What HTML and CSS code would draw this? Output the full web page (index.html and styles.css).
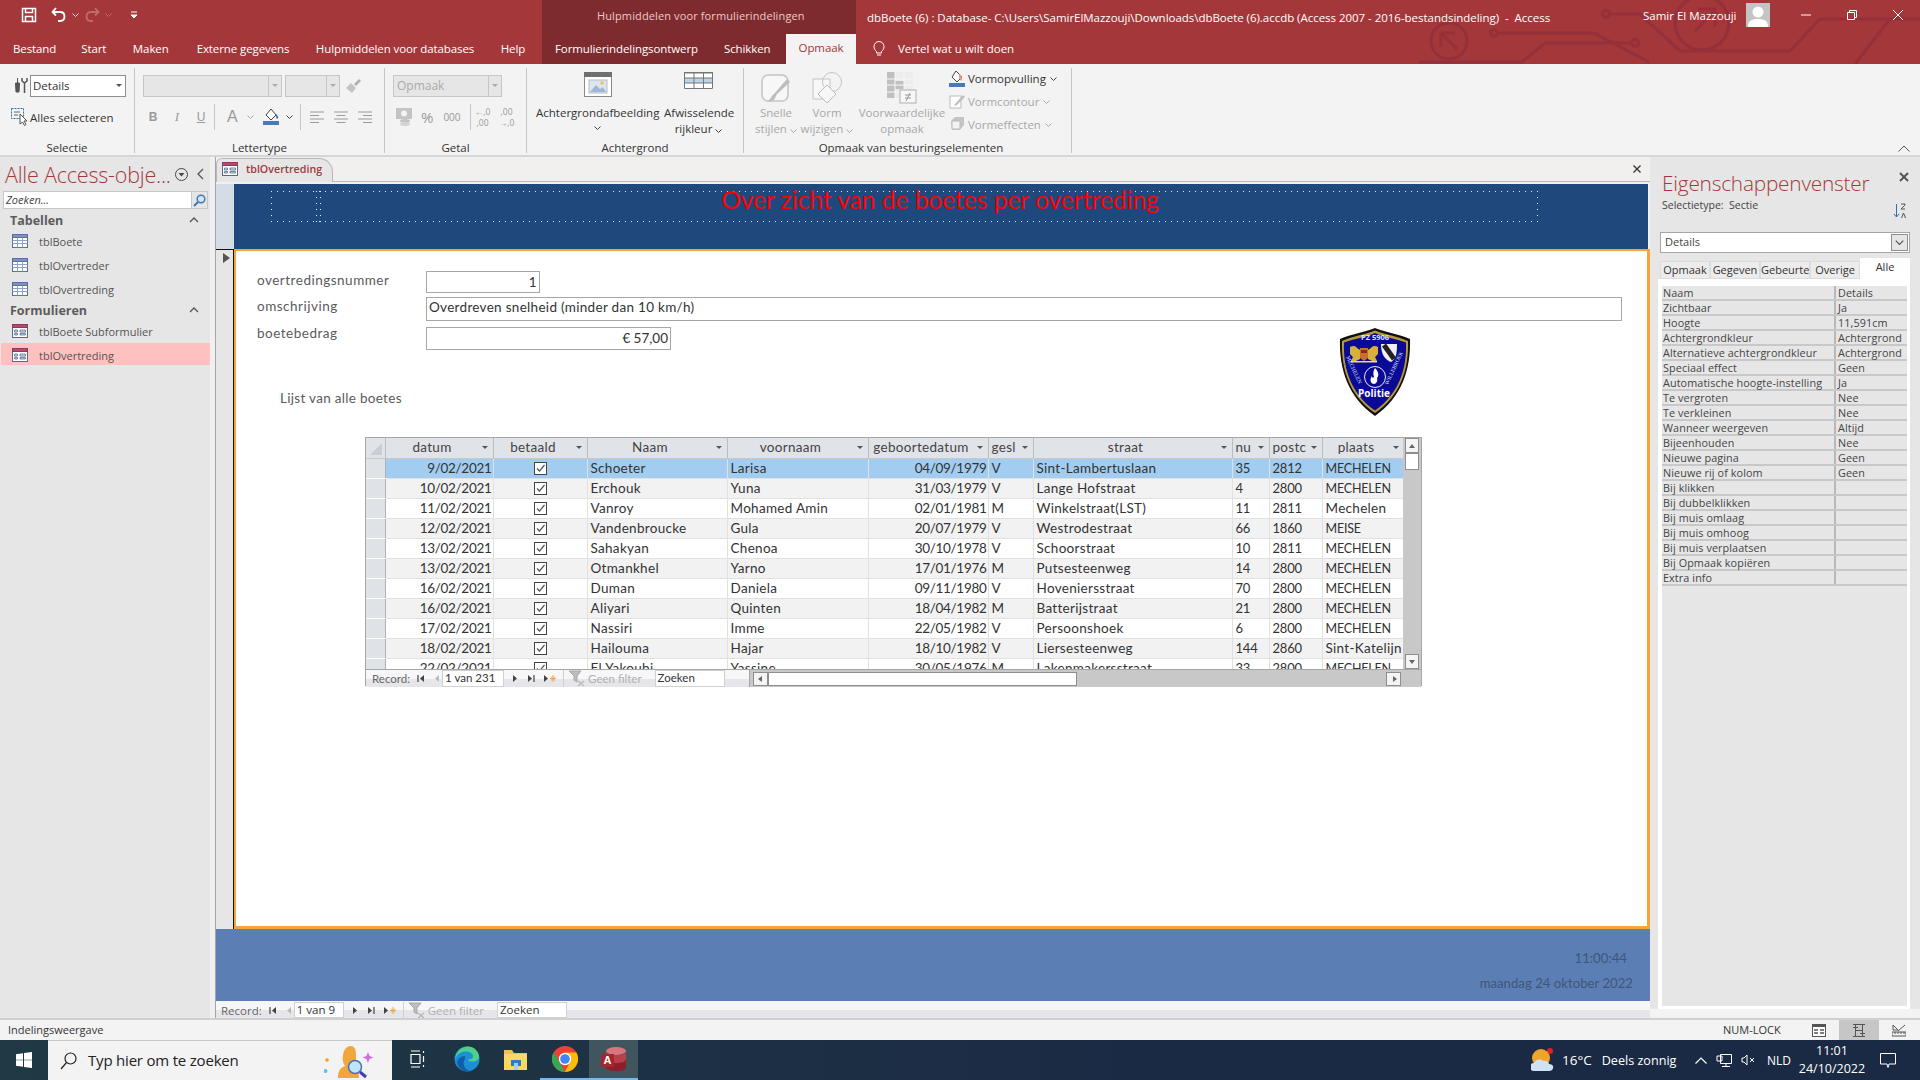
FILE: index.html
```html
<!DOCTYPE html>
<html lang="nl">
<head>
    <meta charset="UTF-8">
    <title>dbBoete - Access</title>
    <link rel="stylesheet" href="styles.css">
</head>
<body>

<!-- shared icons -->
<svg class="defs" width="0" height="0">
    <symbol id="i-table" viewBox="0 0 16 14">
        <rect x="0.5" y="0.5" width="15" height="13" fill="#fff" stroke="#5a6f9e"/>
        <rect x="0.5" y="0.5" width="15" height="3" fill="#7d92bd" stroke="#5a6f9e"/>
        <path d="M5.5 3.5v10M10.5 3.5v10M0.5 6.5h15M0.5 9.5h15" stroke="#8ea2c8" fill="none"/>
    </symbol>
    <symbol id="i-form" viewBox="0 0 16 14">
        <rect x="0.5" y="0.5" width="15" height="13" fill="#fff" stroke="#56688e"/>
        <rect x="0.5" y="0.5" width="15" height="3" fill="#b9476f" stroke="#8f3a5b"/>
        <path d="M2.5 6h3v2h-3zM2.5 9.5h3v1.5h-3zM8 6h5.5v2H8zM8 9.5h5.5v1.5H8z" fill="#dbe3f2" stroke="#56688e" stroke-width="0.8"/>
    </symbol>
    <symbol id="i-chev" viewBox="0 0 7 4">
        <path d="M0.5 0.5l3 3 3-3" fill="none" stroke="currentColor"/>
    </symbol>
    <symbol id="i-check" viewBox="0 0 14 14">
        <rect x="0.5" y="0.5" width="12" height="12" fill="#fff" stroke="#444"/>
        <path d="M3 6.5l2.5 2.5 5-6" fill="none" stroke="#555" stroke-width="1.2"/>
    </symbol>
    <symbol id="i-first" viewBox="0 0 8 9">
        <path d="M1 1v7" stroke="#444" stroke-width="1.2"/><path d="M7 1v7L3 4.500z" fill="#444"/>
    </symbol>
    <symbol id="i-prev" viewBox="0 0 8 9">
        <path d="M6 1v7L2 4.500z" fill="#bbb"/>
    </symbol>
    <symbol id="i-next" viewBox="0 0 8 9">
        <path d="M2 1v7l4-3.500z" fill="#444"/>
    </symbol>
    <symbol id="i-last" viewBox="0 0 8 9">
        <path d="M1 1v7l4-3.500z" fill="#444"/><path d="M7 1v7" stroke="#444" stroke-width="1.2"/>
    </symbol>
    <symbol id="i-new" viewBox="0 0 14 9">
        <path d="M1 1v7l4-3.500z" fill="#444"/>
        <path d="M10 1v7M7 4.500h6M8 2.500l4 4M12 2.500l-4 4" stroke="#e9a94b" stroke-width="1"/>
    </symbol>
    <symbol id="i-funnel" viewBox="0 0 18 17">
        <path d="M1 1h12L9 6v6L6 10V6z" fill="#bdbdbd" stroke="#a8a8a8"/>
        <path d="M10 11l6 5M16 11l-6 5" stroke="#b8b8b8" stroke-width="1.5"/>
    </symbol>
</svg>

<div class="topbar">
    <svg class="circuit" width="505" height="64" viewBox="0 0 505 64">
        <g fill="none" stroke="#93303a" stroke-width="3">
            <circle cx="34" cy="41" r="18"/>
            <path d="M26 33h14M26 33v14M26 33l16 16"/>
            <path d="M4 62h103l23-19h88"/><circle cx="220" cy="43" r="3.500"/>
            <circle cx="79" cy="33" r="3.500"/>
            <path d="M83 33h96l55 29"/>
            <circle cx="191" cy="14" r="3.500"/>
            <path d="M195 14h30l40 37h110l30-32h100"/>
            <circle cx="287" cy="23" r="27"/>
            <path d="M280 31l18-19M283 9h17v17"/>
            <path d="M440 64l35-45"/>
        </g>
    </svg>
    <div class="titlebar">
        <div class="qat">
            <svg class="qat-save" width="16" height="16" viewBox="0 0 16 16"><path d="M1.500 1.500h13v13h-13z M4.500 1.500v4h7v-4 M4.500 14.500v-5h7v5" fill="none" stroke="#fff" stroke-width="1.500"/></svg>
            <svg width="16" height="16" viewBox="0 0 16 16"><path d="M5 1L1.500 5 5 8.500M2 5h7c3 0 4.500 2 4.500 4.500S12 14 9 14H7" fill="none" stroke="#fff" stroke-width="1.800"/></svg>
            <svg class="chev-sm" width="7" height="4"><use href="#i-chev"/></svg>
            <svg class="qat-off" width="16" height="16" viewBox="0 0 16 16"><path d="M11 1l3.500 4L11 8.500M14 5H7C4 5 2.500 7 2.500 9.500S4 14 7 14h2" fill="none" stroke="#c46a6c" stroke-width="1.800"/></svg>
            <svg class="chev-sm qat-off" width="7" height="4"><use href="#i-chev"/></svg>
            <svg class="qat-more" width="8" height="8" viewBox="0 0 8 8"><path d="M1 1h6M1 4h6l-3 3z" fill="#fff" stroke="#fff"/></svg>
        </div>
        <div class="context-title">Hulpmiddelen voor formulierindelingen</div>
        <div class="doc-title">dbBoete (6) : Database- C:\Users\SamirElMazzouji\Downloads\dbBoete (6).accdb (Access 2007 - 2016-bestandsindeling)&nbsp; -&nbsp; Access</div>
        <div class="user">Samir El Mazzouji</div>
        <svg class="avatar" width="24" height="24" viewBox="0 0 24 24">
            <rect width="24" height="24" fill="#c4c4c4"/>
            <circle cx="12" cy="9" r="5.500" fill="#fff"/>
            <path d="M2 24c0-6 3-8 10-8s10 2 10 8z" fill="#fff"/>
        </svg>
        <div class="winbtns">
            <svg width="10" height="10" viewBox="0 0 10 10"><path d="M0 5h10" stroke="#fff"/></svg>
            <svg width="10" height="10" viewBox="0 0 10 10"><path d="M0.500 2.500h7v7h-7zM2.500 2.500v-2h7v7h-2" fill="none" stroke="#fff"/></svg>
            <svg width="10" height="10" viewBox="0 0 10 10"><path d="M0 0l10 10M10 0L0 10" stroke="#fff"/></svg>
        </div>
    </div>
    <div class="tabs">
        <div class="tabs-main">
            <span class="tab t-bestand">Bestand</span>
            <span class="tab t-start">Start</span>
            <span class="tab t-maken">Maken</span>
            <span class="tab t-extern">Externe gegevens</span>
            <span class="tab t-hulp">Hulpmiddelen voor databases</span>
            <span class="tab">Help</span>
        </div>
        <div class="tabs-context">
            <span class="tab t-ontwerp">Formulierindelingsontwerp</span>
            <span class="tab t-schikken">Schikken</span>
            <span class="tab tab-active">Opmaak</span>
        </div>
        <div class="tellme">
            <svg width="12" height="16" viewBox="0 0 12 16"><path d="M3.500 11.500C2 10 1 9 1 6.500a5 5 0 0 1 10 0C11 9 10 10 8.500 11.500v1.500h-5zM4 15h4" fill="none" stroke="#fff"/></svg>
            <span>Vertel wat u wilt doen</span>
        </div>
    </div>
</div>

<div class="ribbon">
    <div class="rgroup g-selectie">
        <div class="rbody">
            <div class="rrow">
                <svg class="sel-tools" width="14" height="16" viewBox="0 0 14 16"><path d="M3.500 0v5M1.500 5h4l-.500 9h-3z" fill="#555" stroke="#555"/><path d="M10.500 5v10M8 0v3l2.500 2L13 3V0" fill="none" stroke="#555" stroke-width="1.500"/></svg>
                <div class="select sel-details">Details<i class="caret"></i></div>
            </div>
            <div class="rrow sel-all">
                <svg width="17" height="18" viewBox="0 0 17 18"><rect x="0.500" y="0.500" width="12" height="10" fill="none" stroke="#2f6fb5" stroke-dasharray="2 1"/><path d="M3 4h6M3 7h4" stroke="#666"/><path d="M9 6v10l2.500-2 2 3.500 1.500-1-2-3.500h3z" fill="#fff" stroke="#555"/></svg>
                <span>Alles selecteren</span>
            </div>
        </div>
        <div class="rlabel">Selectie</div>
    </div>

    <div class="rgroup g-letter">
        <div class="rbody">
            <div class="rrow">
                <div class="select off w-font"><i class="dropbox"></i></div>
                <div class="select off w-size"><i class="dropbox"></i></div>
                <svg class="brush" width="16" height="16" viewBox="0 0 16 16"><path d="M1 10l5-5 5 5-4 5z" fill="#c4c4c4"/><path d="M9 6l5-5 2 2-5 5z" fill="#b0b0b0"/></svg>
            </div>
            <div class="rrow fmt-row">
                <b class="fbtn">B</b>
                <i class="fbtn fbtn-i">I</i>
                <u class="fbtn">U</u>
                <span class="rsep s1"></span>
                <span class="big-a">A</span>
                <svg class="chev-g" width="7" height="4"><use href="#i-chev"/></svg>
                <svg class="fill-ic" width="17" height="17" viewBox="0 0 17 17"><path d="M8 1l-5 6 5 5 5-5z" fill="#fff" stroke="#444"/><path d="M13 6c2 2 3 4 1 5-1-1-1-3-1-5z" fill="#2f6fb5"/><rect y="13" width="16" height="4" fill="#4a7ab5"/></svg>
                <svg class="chev-d" width="7" height="4"><use href="#i-chev"/></svg>
                <span class="rsep s2"></span>
                <svg class="align" width="14" height="12" viewBox="0 0 14 12"><path d="M0 1h14M0 4.500h9M0 8h14M0 11.500h9" stroke="#9a9a9a"/></svg>
                <svg class="align" width="14" height="12" viewBox="0 0 14 12"><path d="M0 1h14M2.500 4.500h9M0 8h14M2.500 11.500h9" stroke="#9a9a9a"/></svg>
                <svg class="align" width="14" height="12" viewBox="0 0 14 12"><path d="M0 1h14M5 4.500h9M0 8h14M5 11.500h9" stroke="#9a9a9a"/></svg>
            </div>
        </div>
        <div class="rlabel">Lettertype</div>
    </div>

    <div class="rgroup g-getal">
        <div class="rbody">
            <div class="rrow">
                <div class="select off w-num"><span>Opmaak</span><i class="dropbox"></i></div>
            </div>
            <div class="rrow fmt-row num-row">
                <svg width="16" height="18" viewBox="0 0 16 18"><rect width="16" height="11" fill="#c4c4c4"/><circle cx="8" cy="5.500" r="3" fill="#f3f3f3"/><ellipse cx="9" cy="13" rx="5" ry="2" fill="#c4c4c4"/><ellipse cx="9" cy="16" rx="5" ry="2" fill="#d4d4d4"/></svg>
                <span class="pct">%</span>
                <span class="thou">000</span>
                <span class="rsep s3"></span>
                <span class="dec">←,0<br>,00</span>
                <span class="dec">,00<br>→,0</span>
            </div>
        </div>
        <div class="rlabel">Getal</div>
    </div>

    <div class="rgroup g-achter">
        <div class="rbody rbody-big">
            <div class="lbtn w-afb">
                <div class="lic">
                    <svg width="28" height="25" viewBox="0 0 28 25"><rect x="0.500" y="0.500" width="27" height="24" fill="#fff" stroke="#8a8a8a"/><rect width="28" height="5" fill="#6f6f6f"/><rect x="5" y="8" width="18" height="13" fill="#dbe6f2" stroke="#bbb"/><path d="M6 20l6-7 4 4 3-2 3 5z" fill="#9db8d6"/><circle cx="18" cy="11" r="1.800" fill="#f0c050"/></svg>
                </div>
                <div>Achtergrondafbeelding</div>
                <svg class="chev-d lchev" width="7" height="4"><use href="#i-chev"/></svg>
            </div>
            <div class="lbtn w-afw">
                <div class="lic">
                    <svg width="29" height="17" viewBox="0 0 29 17"><rect width="29" height="17" fill="#fff"/><rect y="6" width="29" height="5" fill="#bcd3ea"/><path d="M0.500 0.500h28v16h-28zM0.500 6h28M0.500 11h28M10 0v17M19.500 0v17" fill="none" stroke="#777"/><rect x="0" y="0" width="29" height="1.500" fill="#777"/></svg>
                </div>
                <div>Afwisselende</div>
                <div>rijkleur <svg class="chev-d" width="7" height="4"><use href="#i-chev"/></svg></div>
            </div>
        </div>
        <div class="rlabel">Achtergrond</div>
    </div>

    <div class="rgroup g-opmaak">
        <div class="rbody rbody-big">
            <div class="lbtn off-txt w-snel">
                <div class="lic">
                    <svg width="30" height="32" viewBox="0 0 30 32"><rect x="1" y="3" width="26" height="26" rx="6" fill="#f7f7f7" stroke="#c4c4c4" stroke-width="1.500"/><path d="M29 10L16 22l-3 6c-3 1-5 2-7 1 4-1 4-5 7-7l13-15z" fill="#bdbdbd"/></svg>
                </div>
                <div>Snelle</div>
                <div>stijlen <svg class="chev-g" width="7" height="4"><use href="#i-chev"/></svg></div>
            </div>
            <div class="lbtn off-txt w-vorm">
                <div class="lic">
                    <svg width="30" height="33" viewBox="0 0 30 33"><path d="M1 7h17v20H1z" fill="#f7f7f7" stroke="#c4c4c4"/><circle cx="20" cy="10" r="9.500" fill="none" stroke="#c4c4c4"/><path d="M15 13l9 9-9 9-9-9z" fill="#f7f7f7" stroke="#bbb"/></svg>
                </div>
                <div>Vorm</div>
                <div>wijzigen <svg class="chev-g" width="7" height="4"><use href="#i-chev"/></svg></div>
            </div>
            <div class="lbtn off-txt w-voor">
                <div class="lic">
                    <svg width="30" height="32" viewBox="0 0 30 32"><path d="M0 0h26v26H0z" fill="#ececec"/><path d="M0 0h8v26H0zM8 9h9v8H8z" fill="#c0c0c0"/><path d="M0 7h26M0 13h26M0 20h26M8 0v26M17 0v26" stroke="#f7f7f7"/><rect x="13" y="18" width="16" height="13" fill="#f7f7f7" stroke="#b0b0b0"/><path d="M18 23h6M18 26h6M23 21l-4 8" stroke="#999"/></svg>
                </div>
                <div>Voorwaardelijke</div>
                <div>opmaak</div>
            </div>
            <div class="shape-col">
                <div class="shape-row on">
                    <svg width="17" height="17" viewBox="0 0 17 17"><path d="M7 1l-4 6 5 5 5-5z" fill="#fff" stroke="#444"/><path d="M10 4c3 1 4 5 2 7l-2-3z" fill="#e89a7a"/><rect y="13" width="16" height="4" fill="#4a7ab5"/></svg>
                    <span>Vormopvulling</span>
                    <svg class="chev-d" width="7" height="4"><use href="#i-chev"/></svg>
                </div>
                <div class="shape-row">
                    <svg width="17" height="17" viewBox="0 0 17 17"><rect x="1" y="3" width="11" height="12" fill="#fff" stroke="#bbb"/><path d="M6 11l8-9 2 2-8 8-3 1z" fill="#c0c0c0"/></svg>
                    <span>Vormcontour</span>
                    <svg class="chev-g" width="7" height="4"><use href="#i-chev"/></svg>
                </div>
                <div class="shape-row">
                    <svg width="17" height="17" viewBox="0 0 17 17"><path d="M2 5l4-4h9v8l-4 5H3z" fill="#c4c4c4"/><path d="M3 5h8v8H3z" fill="#f3f3f3" stroke="#bbb"/></svg>
                    <span>Vormeffecten</span>
                    <svg class="chev-g" width="7" height="4"><use href="#i-chev"/></svg>
                </div>
            </div>
        </div>
        <div class="rlabel rlabel-opmaak">Opmaak van besturingselementen</div>
    </div>

    <svg class="collapse" width="12" height="7" viewBox="0 0 12 7"><path d="M0.500 6.500L6 1l5.500 5.500" fill="none" stroke="#555"/></svg>
</div>

<div class="main">
    <nav class="nav">
        <div class="nav-head">
            <span class="nav-title">Alle Access-obje...</span>
            <svg width="13" height="13" viewBox="0 0 13 13"><circle cx="6.500" cy="6.500" r="6" fill="none" stroke="#444"/><path d="M3.500 5h6l-3 3.500z" fill="#444"/></svg>
            <svg class="nav-back" width="7" height="12" viewBox="0 0 7 12"><path d="M6 1L1 6l5 5" fill="none" stroke="#555" stroke-width="1.300"/></svg>
        </div>
        <div class="nav-search">
            <span class="nav-input">Zoeken...</span>
            <span class="nav-mag"><svg width="13" height="13" viewBox="0 0 13 13"><circle cx="8" cy="5" r="3.800" fill="#d6e6f5" stroke="#3c78b5" stroke-width="1.500"/><path d="M5 8l-4 4" stroke="#3c78b5" stroke-width="2"/></svg></span>
        </div>
        <div class="nav-cat"><span>Tabellen</span><svg width="10" height="6" viewBox="0 0 10 6"><path d="M1 5l4-4 4 4" fill="none" stroke="#555" stroke-width="1.300"/></svg></div>
        <div class="nav-item"><svg width="16" height="14"><use href="#i-table"/></svg>tblBoete</div>
        <div class="nav-item"><svg width="16" height="14"><use href="#i-table"/></svg>tblOvertreder</div>
        <div class="nav-item"><svg width="16" height="14"><use href="#i-table"/></svg>tblOvertreding</div>
        <div class="nav-cat nav-cat-2"><span>Formulieren</span><svg width="10" height="6" viewBox="0 0 10 6"><path d="M1 5l4-4 4 4" fill="none" stroke="#555" stroke-width="1.300"/></svg></div>
        <div class="nav-item"><svg width="16" height="14"><use href="#i-form"/></svg>tblBoete Subformulier</div>
        <div class="nav-item nav-sel"><svg width="16" height="14"><use href="#i-form"/></svg>tblOvertreding</div>
    </nav>

    <section class="doc">
        <div class="doc-tabs">
            <div class="doc-tab">
                <svg width="16" height="14"><use href="#i-form"/></svg>
                <span>tblOvertreding</span>
            </div>
            <svg class="doc-close" width="8" height="8" viewBox="0 0 8 8"><path d="M0.500 0.500l7 7M7.500 0.500l-7 7" stroke="#333" stroke-width="1.300"/></svg>
        </div>

        <div class="form-header">
            <div class="sel-head"></div>
            <div class="head-blue">
                <div class="head-box">
                    <span class="head-title">Over zicht van de boetes per overtreding</span>
                </div>
            </div>
        </div>

        <div class="form-detail">
            <div class="sel-detail"><i class="sel-arrow"></i></div>
            <div class="detail">
                <svg class="logo" width="72" height="90" viewBox="0 0 72 90">
                    <path d="M36 1C26 5 12 7 1 12c-1 30 8 58 35 77C63 70 72 42 71 12 60 7 46 5 36 1z" fill="#111"/>
                    <path d="M36 3.500C26 7.500 13 9.500 3 14c-1 29 8 55 33 72C61 69 70 43 69 14 59 9.500 46 7.500 36 3.500z" fill="#b79a3a"/>
                    <path d="M36 6C27 10 15 12 5 15.500c-1 28 8 52 31 68 23-16 32-40 31-68C57 12 45 10 36 6z" fill="#0a0a96"/>
                    <text x="36" y="13" class="logo-pz">PZ 5906</text>
                    <path d="M11 20c3-2 6-1 7 1l3 2v9l-4 2h-5l2-4-3-3z" fill="#d6b23c"/>
                    <path d="M39 20c-3-2-6-1-7 1l-3 2v9l4 2h5l-2-4 3-3z" fill="#d6b23c"/>
                    <path d="M21 21h8v10l-4 3-4-3z" fill="#c9702a"/>
                    <path d="M22 23h6v3h-6z" fill="#8a2a1c"/>
                    <rect x="12" y="34" width="26" height="1.500" fill="#e3d9a0"/>
                    <path d="M42 17h16c0 10-1 15-6 18-5-2-10-6-10-18z" fill="#f0f0f0"/>
                    <path d="M45 18l10 14" stroke="#222" stroke-width="5"/>
                    <text x="7" y="30" class="logo-side" transform="rotate(65 7 30)">MECHELEN</text>
                    <text x="49" y="58" class="logo-side" transform="rotate(-65 49 58)">WILLEBROEK</text>
                    <circle cx="36" cy="50" r="10.500" fill="none" stroke="#e8e8f6"/>
                    <path d="M36 41c4 4 4 8 2 10 1 3-1 6-3 6-3 0-5-4-2-8 0 2 1 2 2 1-1-3-1-6 1-9z" fill="#fff"/>
                    <text x="35" y="70" class="logo-pol">Politie</text>
                </svg>
                <div class="field f-nr">
                    <label>overtredingsnummer</label>
                    <div class="inp inp-r w-nr">1</div>
                </div>
                <div class="field f-om">
                    <label>omschrijving</label>
                    <div class="inp w-om">Overdreven snelheid (minder dan 10 km/h)</div>
                </div>
                <div class="field f-bo">
                    <label>boetebedrag</label>
                    <div class="inp inp-r w-bo">€&#8239;57,00</div>
                </div>
                <div class="sub-label">Lijst van alle boetes</div>

                <div class="ds">
                    <div class="ds-body">
                        <div class="ds-clip">
                            <table class="ds-table">
                                <colgroup>
                                    <col class="c-sel"><col class="c-dat"><col class="c-bet"><col class="c-naam"><col class="c-voor"><col class="c-geb"><col class="c-ges"><col class="c-str"><col class="c-nu"><col class="c-pc"><col class="c-pl">
                                </colgroup>
                                <thead>
                                    <tr><th class="corner"><i class="corner-mark"></i></th><th>datum</th><th>betaald</th><th>Naam</th><th>voornaam</th><th>geboortedatum</th><th class="tl">gesl</th><th>straat</th><th class="tl">nu</th><th class="tl">postc</th><th>plaats</th></tr>
                                </thead>
                                <tbody>
                                    <tr class="cur"><td class="rs"></td><td class="r">9/02/2021</td><td class="c"><svg width="14" height="14"><use href="#i-check"/></svg></td><td>Schoeter</td><td>Larisa</td><td class="r">04/09/1979</td><td>V</td><td>Sint-Lambertuslaan</td><td class="n">35</td><td class="n">2812</td><td class="up">MECHELEN</td></tr>
                                    <tr><td class="rs"></td><td class="r">10/02/2021</td><td class="c"><svg width="14" height="14"><use href="#i-check"/></svg></td><td>Erchouk</td><td>Yuna</td><td class="r">31/03/1979</td><td>V</td><td>Lange Hofstraat</td><td class="n">4</td><td class="n">2800</td><td class="up">MECHELEN</td></tr>
                                    <tr><td class="rs"></td><td class="r">11/02/2021</td><td class="c"><svg width="14" height="14"><use href="#i-check"/></svg></td><td>Vanroy</td><td>Mohamed Amin</td><td class="r">02/01/1981</td><td>M</td><td>Winkelstraat(LST)</td><td class="n">11</td><td class="n">2811</td><td>Mechelen</td></tr>
                                    <tr><td class="rs"></td><td class="r">12/02/2021</td><td class="c"><svg width="14" height="14"><use href="#i-check"/></svg></td><td>Vandenbroucke</td><td>Gula</td><td class="r">20/07/1979</td><td>V</td><td>Westrodestraat</td><td class="n">66</td><td class="n">1860</td><td class="up">MEISE</td></tr>
                                    <tr><td class="rs"></td><td class="r">13/02/2021</td><td class="c"><svg width="14" height="14"><use href="#i-check"/></svg></td><td>Sahakyan</td><td>Chenoa</td><td class="r">30/10/1978</td><td>V</td><td>Schoorstraat</td><td class="n">10</td><td class="n">2811</td><td class="up">MECHELEN</td></tr>
                                    <tr><td class="rs"></td><td class="r">13/02/2021</td><td class="c"><svg width="14" height="14"><use href="#i-check"/></svg></td><td>Otmankhel</td><td>Yarno</td><td class="r">17/01/1976</td><td>M</td><td>Putsesteenweg</td><td class="n">14</td><td class="n">2800</td><td class="up">MECHELEN</td></tr>
                                    <tr><td class="rs"></td><td class="r">16/02/2021</td><td class="c"><svg width="14" height="14"><use href="#i-check"/></svg></td><td>Duman</td><td>Daniela</td><td class="r">09/11/1980</td><td>V</td><td>Hoveniersstraat</td><td class="n">70</td><td class="n">2800</td><td class="up">MECHELEN</td></tr>
                                    <tr><td class="rs"></td><td class="r">16/02/2021</td><td class="c"><svg width="14" height="14"><use href="#i-check"/></svg></td><td>Aliyari</td><td>Quinten</td><td class="r">18/04/1982</td><td>M</td><td>Batterijstraat</td><td class="n">21</td><td class="n">2800</td><td class="up">MECHELEN</td></tr>
                                    <tr><td class="rs"></td><td class="r">17/02/2021</td><td class="c"><svg width="14" height="14"><use href="#i-check"/></svg></td><td>Nassiri</td><td>Imme</td><td class="r">22/05/1982</td><td>V</td><td>Persoonshoek</td><td class="n">6</td><td class="n">2800</td><td class="up">MECHELEN</td></tr>
                                    <tr><td class="rs"></td><td class="r">18/02/2021</td><td class="c"><svg width="14" height="14"><use href="#i-check"/></svg></td><td>Hailouma</td><td>Hajar</td><td class="r">18/10/1982</td><td>V</td><td>Liersesteenweg</td><td class="n">144</td><td class="n">2860</td><td>Sint-Katelijn</td></tr>
                                    <tr><td class="rs"></td><td class="r">22/02/2021</td><td class="c"><svg width="14" height="14"><use href="#i-check"/></svg></td><td>El Yakoubi</td><td>Yassine</td><td class="r">30/05/1976</td><td>M</td><td>Lakenmakersstraat</td><td class="n">33</td><td class="n">2800</td><td class="up">MECHELEN</td></tr>
                                </tbody>
                            </table>
                        </div>
                        <div class="vscroll">
                            <div class="sb-btn"><i class="up"></i></div>
                            <div class="sb-thumb"></div>
                            <div class="sb-track"></div>
                            <div class="sb-btn"><i class="down"></i></div>
                        </div>
                    </div>
                    <div class="ds-nav">
                        <div class="recnav rec-ds">
                            <span class="rec-lbl">Record:</span>
                            <svg class="rn" width="8" height="9"><use href="#i-first"/></svg>
                            <svg class="rn rn-p" width="8" height="9"><use href="#i-prev"/></svg>
                            <span class="rec-box rb-231">1 van 231</span>
                            <svg class="rn rn-n" width="8" height="9"><use href="#i-next"/></svg>
                            <svg class="rn" width="8" height="9"><use href="#i-last"/></svg>
                            <svg class="rn-new" width="14" height="9"><use href="#i-new"/></svg>
                            <span class="rec-filter"><svg width="18" height="17"><use href="#i-funnel"/></svg>Geen filter</span>
                            <span class="rec-box rb-zoek">Zoeken</span>
                        </div>
                        <div class="hscroll">
                            <div class="sb-btn"><i class="left"></i></div>
                            <div class="sb-thumb-h"></div>
                            <div class="sb-track"></div>
                            <div class="sb-btn"><i class="right"></i></div>
                            <div class="sb-corner"></div>
                        </div>
                    </div>
                </div>
            </div>
        </div>

        <div class="form-footer">
            <div class="foot-time">11:00:44</div>
            <div class="foot-date">maandag 24 oktober 2022</div>
        </div>

        <div class="recnav rec-form">
            <span class="rec-lbl">Record:</span>
            <svg class="rn" width="8" height="9"><use href="#i-first"/></svg>
            <svg class="rn rn-p" width="8" height="9"><use href="#i-prev"/></svg>
            <span class="rec-box rb-9">1 van 9</span>
            <svg class="rn rn-n" width="8" height="9"><use href="#i-next"/></svg>
            <svg class="rn" width="8" height="9"><use href="#i-last"/></svg>
            <svg class="rn-new" width="14" height="9"><use href="#i-new"/></svg>
            <span class="rec-filter"><svg width="18" height="17"><use href="#i-funnel"/></svg>Geen filter</span>
            <span class="rec-box rb-zoek">Zoeken</span>
        </div>
    </section>

    <aside class="props">
        <div class="props-head">
            <span class="props-title">Eigenschappenvenster</span>
            <svg width="10" height="10" viewBox="0 0 10 10"><path d="M1 1l8 8M9 1l-8 8" stroke="#555" stroke-width="2"/></svg>
        </div>
        <div class="props-type">
            <span>Selectietype:&nbsp; Sectie</span>
            <svg width="14" height="16" viewBox="0 0 14 16"><path d="M3.500 1v13M1 11l2.500 3L6 11" fill="none" stroke="#2f6fb5"/><path d="M8 1h4v1L8 6h4M8.500 15l2-5 2 5" fill="none" stroke="#555"/></svg>
        </div>
        <div class="props-select">Details<span class="props-drop"><svg width="9" height="5"><use href="#i-chev"/></svg></span></div>
        <div class="props-tabs">
            <span>Opmaak</span><span>Gegeven</span><span>Gebeurte</span><span>Overige</span><span class="ptab-on">Alle</span>
        </div>
        <div class="props-body">
            <div class="prow"><span>Naam</span><span>Details</span></div>
            <div class="prow"><span>Zichtbaar</span><span>Ja</span></div>
            <div class="prow"><span>Hoogte</span><span>11,591cm</span></div>
            <div class="prow"><span>Achtergrondkleur</span><span>Achtergrond</span></div>
            <div class="prow"><span>Alternatieve achtergrondkleur</span><span>Achtergrond</span></div>
            <div class="prow"><span>Speciaal effect</span><span>Geen</span></div>
            <div class="prow"><span>Automatische hoogte-instelling</span><span>Ja</span></div>
            <div class="prow"><span>Te vergroten</span><span>Nee</span></div>
            <div class="prow"><span>Te verkleinen</span><span>Nee</span></div>
            <div class="prow"><span>Wanneer weergeven</span><span>Altijd</span></div>
            <div class="prow"><span>Bijeenhouden</span><span>Nee</span></div>
            <div class="prow"><span>Nieuwe pagina</span><span>Geen</span></div>
            <div class="prow"><span>Nieuwe rij of kolom</span><span>Geen</span></div>
            <div class="prow"><span>Bij klikken</span><span></span></div>
            <div class="prow"><span>Bij dubbelklikken</span><span></span></div>
            <div class="prow"><span>Bij muis omlaag</span><span></span></div>
            <div class="prow"><span>Bij muis omhoog</span><span></span></div>
            <div class="prow"><span>Bij muis verplaatsen</span><span></span></div>
            <div class="prow"><span>Bij Opmaak kopiëren</span><span></span></div>
            <div class="prow"><span>Extra info</span><span></span></div>
        </div>
    </aside>
</div>

<div class="status">
    <span class="st-text">Indelingsweergave</span>
    <span class="st-num">NUM-LOCK</span>
    <span class="st-view"><svg width="14" height="13" viewBox="0 0 14 13"><rect x="0.500" y="0.500" width="13" height="12" fill="#fff" stroke="#555"/><rect width="14" height="3" fill="#555"/><path d="M2 6h4M2 9h4M8 6h4M8 9h4" stroke="#555" stroke-width="1.500"/></svg></span>
    <span class="st-view st-on"><svg width="12" height="13" viewBox="0 0 12 13"><path d="M0 0.500h12M0 12.500h12M2.500 0v13M9.500 0v13M2.500 6.500h7M0 3.500h5M7 9.500h5" fill="none" stroke="#555"/></svg></span>
    <span class="st-view"><svg width="14" height="13" viewBox="0 0 14 13"><path d="M1 1v5h5zM0 8h14v4H0zM3 8v2M6 8v2M9 8v2M12 8v2M6 7l7-6" fill="none" stroke="#555"/></svg></span>
</div>

<footer class="taskbar">
    <div class="tb-start">
        <svg width="16" height="16" viewBox="0 0 16 16"><path d="M0 2.300l7-1v6.400H0zM8 1.100L16 0v7.700H8zM0 8.300h7v6.400l-7-1zM8 8.300h8V16l-8-1.100z" fill="#fff"/></svg>
    </div>
    <div class="tb-search">
        <svg width="17" height="18" viewBox="0 0 17 18"><circle cx="10.500" cy="6.500" r="5.500" fill="none" stroke="#222" stroke-width="1.200"/><path d="M6.500 10.500L1 17" stroke="#222" stroke-width="1.200"/></svg>
        <span>Typ hier om te zoeken</span>
        <svg class="tb-doodle" width="50" height="38" viewBox="0 0 50 38">
            <circle cx="3" cy="18" r="1.800" fill="#e9a02c"/>
            <circle cx="1.500" cy="29" r="2" fill="#55c8e0"/>
            <path d="M14 36c0-7 2-10 7-12-2-3-3-6-2-11 1-6 4-9 8-9 3 0 5 3 5 8v13c2 3 3 7 3 11z" fill="#f0a83c"/>
            <circle cx="31" cy="25" r="6.500" fill="#bfe6f5" stroke="#4a6fc0" stroke-width="1.500"/>
            <path d="M36 30l6 5" stroke="#3e3eb8" stroke-width="3"/>
            <path d="M44 10l1.500 4 4 1.500-4 1.500-1.500 4-1.500-4-4-1.500 4-1.500z" fill="#d36ae0"/>
        </svg>
    </div>
    <div class="tb-apps">
        <span class="tb-app">
            <svg width="15" height="18" viewBox="0 0 15 18"><path d="M1 1h9M1 17h9M1 4.500h9v9H1zM13.500 1v2M13.500 6v6M13.500 15v2" fill="none" stroke="#fff" stroke-width="1.200"/></svg>
        </span>
        <span class="tb-app">
            <svg width="26" height="26" viewBox="0 0 26 26"><circle cx="13" cy="13" r="12.500" fill="#1c8fd6"/><path d="M1 13C2 5 8 .5 14 .5c6 0 11 5 11 10 0 4-4 5-7 5-3 0-4-1-4-2 3 0 5-1 5-3 0-3-3-5-7-5C7 5.500 3 8 1 13z" fill="#4fd08a"/><path d="M11 13c-3 4-1 11 6 12-7 2-13-3-14-8 0-4 4-7 8-7z" fill="#0f5fa8"/></svg>
        </span>
        <span class="tb-app">
            <svg width="23" height="22" viewBox="0 0 23 22"><path d="M0 2h8l2 3h13v17H0z" fill="#f0c048"/><path d="M0 6h23v16H0z" fill="#fad764"/><rect x="7" y="12" width="10" height="6" fill="#2a7cc8"/><rect x="10" y="15" width="4" height="7" fill="#9fd0f0"/></svg>
        </span>
        <span class="tb-app">
            <svg width="26" height="26" viewBox="0 0 26 26"><circle cx="13" cy="13" r="13" fill="#ea4335"/><path d="M13 26A13 13 0 0 1 1.700 6.500L8 17z" fill="#34a853"/><path d="M13 26a13 13 0 0 0 11.300-19.500H13l5 9z" fill="#fbbc05"/><circle cx="13" cy="13" r="6.200" fill="#fff"/><circle cx="13" cy="13" r="4.800" fill="#4285f4"/></svg>
        </span>
        <span class="tb-app tb-app-on">
            <svg width="26" height="26" viewBox="0 0 26 26"><ellipse cx="15" cy="5" rx="10" ry="4" fill="#d9767d"/><path d="M5 5c0 3 4 4 10 4s10-1 10-4v8c0 3-4 4-10 4S5 16 5 13z" fill="#b8404a"/><path d="M5 13c0 3 4 4 10 4s10-1 10-4v8c0 3-4 4-10 4S5 24 5 21z" fill="#8c1f2a"/><rect y="8" width="13" height="13" fill="#a4262e"/><text x="6.500" y="18" class="tb-a">A</text></svg>
        </span>
    </div>
    <div class="tb-tray">
        <svg class="tb-sun" width="23" height="24" viewBox="0 0 23 24"><circle cx="19" cy="3" r="3" fill="#d22"/><circle cx="10" cy="10" r="9" fill="#f0a428"/><path d="M3 23a4 4 0 0 1 0-8c1-3 6-5 9-2 3-1 6 1 6 3 3 0 5 2 4 4 0 2-2 3-4 3z" fill="#cfe3f5"/></svg>
        <span class="tb-temp">16°C</span>
        <span class="tb-weather">Deels zonnig</span>
        <svg class="tb-caret" width="12" height="7" viewBox="0 0 12 7"><path d="M0.500 6.500L6 1l5.500 5.500" fill="none" stroke="#fff" stroke-width="1.200"/></svg>
        <svg class="tb-net" width="16" height="14" viewBox="0 0 16 14"><path d="M4.500 1.500h11v9h-11zM1 3h5v5H1zM10 10.500v3M6 13.500h8" fill="#1c2b44" stroke="#fff"/></svg>
        <svg class="tb-vol" width="14" height="12" viewBox="0 0 14 12"><path d="M1 4h2l3-3v10L3 8H1zM9 4l4 4M13 4l-4 4" fill="none" stroke="#fff"/></svg>
        <span class="tb-lang">NLD</span>
        <div class="tb-clock"><span>11:01</span><span>24/10/2022</span></div>
        <svg class="tb-note" width="16" height="15" viewBox="0 0 16 15"><path d="M0.500 0.500h15v10.500H9L8 14.500 7 11H0.500z" fill="none" stroke="#fff"/></svg>
    </div>
</footer>

</body>
</html>
```

FILE: styles.css
```css
/* Reset */
* {
    margin: 0;
    padding: 0;
    box-sizing: border-box;
}

body {
    width: 1920px;
    height: 1080px;
    overflow: hidden;
    display: flex;
    flex-direction: column;
    font-family: "Open Sans", "Noto Sans", sans-serif;
    font-size: 11.5px;
    color: #333;
    background: #f3f3f3;
}

svg {
    flex: none;
}

.defs {
    position: absolute;
}

/* Title bar + tabs */
.topbar {
    position: relative;
    height: 64px;
    background: #a4373a;
    color: #fff;
    flex: none;
}

.circuit {
    position: absolute;
    left: 1415px;
    top: 0;
}

.titlebar {
    position: relative;
    display: flex;
    height: 34px;
}

.qat {
    width: 542px;
    display: flex;
    align-items: center;
    padding: 0 0 4px 21px;
}

.qat svg {
    margin-right: 5px;
}

.qat .qat-save {
    margin-right: 14px;
}

.qat .qat-more {
    margin-left: 13px;
}

.chev-sm {
    color: #f3d9d9;
}

.qat-off {
    color: #c46a6c;
}

.context-title {
    width: 314px;
    background: #7e2b30;
    color: #efc9c9;
    padding: 8px 0 0 55px;
    letter-spacing: 0.12px;
    font-size: 11px;
}

.doc-title {
    width: 752px;
    padding: 10px 0 0 11px;
    white-space: nowrap;
    font-size: 11.5px;
    letter-spacing: -0.03px;
}

.user {
    width: 130px;
    padding-top: 8px;
    margin-left: 35px;
    white-space: nowrap;
}

.avatar {
    margin: 3px 0 0 -27px;
}

.winbtns {
    display: flex;
    gap: 36px;
    padding: 10px 0 0 31px;
}

.tabs {
    position: relative;
    display: flex;
    height: 30px;
}

.tabs-main {
    width: 542px;
    display: flex;
    align-items: center;
    padding: 0 0 2px 13px;
}

.tab {
    white-space: nowrap;
    letter-spacing: -0.1px;
}

.t-bestand { margin-right: 25px; }
.t-start { margin-right: 26.5px; }
.t-maken { margin-right: 28px; }
.t-extern { margin-right: 26.5px; }
.t-hulp { margin-right: 26.5px; }

.tabs-context {
    width: 314px;
    background: #7e2b30;
    display: flex;
    align-items: center;
    padding: 0 0 2px 13px;
}

.t-ontwerp { margin-right: 26px; }
.t-schikken { margin-right: 15px; }

.tab-active {
    margin-left: auto;
    width: 70px;
    background: #f3f3f3;
    color: #a4373a;
    text-align: center;
    line-height: 28px;
    margin-bottom: -2px;
    height: 30px;
}

.tellme {
    display: flex;
    align-items: center;
    gap: 13px;
    padding: 0 0 2px 17px;
}

/* Ribbon */
.ribbon {
    position: relative;
    flex: none;
    height: 93px;
    background: #f3f3f3;
    border-bottom: 2px solid #d6d6d6;
    display: flex;
    padding-top: 4px;
}

.rgroup {
    height: 85px;
    display: flex;
    flex-direction: column;
    border-right: 1px solid #c6c6c6;
    flex: none;
}

.rbody {
    height: 72px;
    padding-top: 7px;
    flex: none;
}

.rlabel {
    height: 16px;
    line-height: 16px;
    text-align: center;
    flex: none;
}

.rlabel-opmaak {
    padding-left: 7px;
}

.g-selectie { width: 135px; }
.g-letter { width: 250px; }
.g-getal { width: 142px; }
.g-achter { width: 217px; }
.g-opmaak { width: 328px; }

.rrow {
    display: flex;
    align-items: center;
}

.g-selectie .rbody { padding-left: 14px; }
.g-letter .rbody, .g-getal .rbody { padding-left: 8px; }

.select {
    position: relative;
    height: 22px;
    border: 1px solid #a6a6a6;
    background: #fff;
    padding-left: 2px;
    line-height: 19px;
    flex: none;
}

.sel-tools {
    margin-right: 2px;
}

.sel-details {
    width: 96px;
    border-color: #8e8e8e;
}

.caret {
    position: absolute;
    right: 3px;
    top: 8px;
    border: 3px solid transparent;
    border-top: 3px solid #555;
}

.sel-all {
    margin: 11px 0 0 -3px;
    gap: 2px;
}

.select.off {
    background: #e6e6e6;
    border-color: #c6c6c6;
    color: #aaa;
}

.dropbox {
    position: absolute;
    right: 0;
    top: 0;
    width: 13px;
    height: 100%;
    border-left: 1px solid #c6c6c6;
}

.dropbox::after {
    content: "";
    position: absolute;
    left: 3px;
    top: 8px;
    border: 3px solid transparent;
    border-top: 3px solid #aaa;
}

.w-font { width: 139px; margin-right: 3px; }
.w-size { width: 55px; margin-right: 5px; }
.w-num { width: 109px; font-size: 12px; padding-left: 3px; }

.fmt-row {
    margin-top: 11px;
    height: 17px;
    color: #999;
}

.fbtn {
    width: 20px;
    margin-right: 4px;
    text-align: center;
    font-size: 12px;
    font-family: "Liberation Sans", sans-serif;
}

.fbtn-i {
    font-family: "Liberation Serif", serif;
    font-size: 13px;
}

.rsep {
    width: 1px;
    height: 26px;
    background: #c6c6c6;
    flex: none;
}

.s1 { margin: 0 12px 0 -1px; }
.s2 { margin: 0 9px 0 7px; }
.s3 { margin: 0 0 0 9px; }

.big-a {
    font-size: 16px;
    font-family: "Liberation Sans", sans-serif;
    margin-right: 9px;
}

.chev-g { color: #a8a8a8; }
.chev-d { color: #444; }

.fill-ic { margin: 0 6px 0 9px; }

.align { margin-right: 10px; }

.num-row {
    padding-left: 3px;
}

.pct {
    font-size: 15px;
    margin: 0 10px 0 9px;
}

.thou {
    font-size: 10px;
}

.dec {
    font-size: 8.500px;
    line-height: 11px;
    width: 24px;
    text-align: center;
    flex: none;
}

.rbody-big {
    display: flex;
    padding: 4px 0 0 9px;
    line-height: 16px;
}

.lbtn {
    text-align: center;
    flex: none;
    white-space: nowrap;
}

.lic {
    height: 33px;
    display: flex;
    justify-content: center;
    align-items: flex-start;
}

.lchev {
    display: block;
    margin: 5px auto 0;
}

.w-afb { width: 123px; margin-right: 5px; }
.w-afw { width: 69px; }
.w-snel { width: 46px; }
.w-vorm { width: 56px; }
.w-voor { width: 94px; }

.off-txt {
    color: #a8a8a8;
}

.shape-col {
    margin-top: -5px;
}

.shape-row {
    height: 23px;
    display: flex;
    align-items: center;
    gap: 2px;
    color: #a8a8a8;
    white-space: nowrap;
}

.shape-row .chev-g, .shape-row .chev-d {
    margin-left: 2px;
}

.shape-row.on {
    color: #333;
}

.collapse {
    position: absolute;
    right: 10px;
    bottom: 3px;
}

/* Main area */
.main {
    flex: none;
    height: 861px;
    display: flex;
}

.nav {
    width: 215px;
    height: 100%;
    background: #e6e6e6;
    border-right: 5px solid #f0f0f0;
    flex: none;
    color: #555;
}

.nav-head {
    height: 34px;
    display: flex;
    align-items: center;
    padding-left: 5px;
}

.nav-title {
    font-size: 21.5px;
    font-weight: 300;
    color: #a4373a;
    width: 170px;
    white-space: nowrap;
    letter-spacing: -0.2px;
}

.nav-back {
    margin-left: 9px;
}

.nav-search {
    height: 18px;
    margin: 0 2px 0 3px;
    display: flex;
    border: 1px solid #c6c6c6;
}

.nav-input {
    flex: 1;
    background: #fff;
    font-style: italic;
    color: #444;
    font-size: 11px;
    line-height: 15px;
    padding-left: 2px;
}

.nav-mag {
    width: 16px;
    border-left: 1px solid #c6c6c6;
    display: flex;
    align-items: center;
    justify-content: center;
}

.nav-cat {
    height: 20px;
    display: flex;
    justify-content: space-between;
    align-items: center;
    padding: 2px 11px 0 10px;
    font-size: 12.5px;
    font-weight: 700;
    color: #5c5c5c;
}

.nav-cat-2 {
    margin-top: -2px;
}

.nav-item {
    height: 24px;
    display: flex;
    align-items: center;
    gap: 11px;
    padding-left: 12px;
    white-space: nowrap;
    font-size: 11px;
}

.nav-sel {
    height: 22px;
    margin-left: 1px;
    padding: 2px 0 0 11px;
    background: #ffc0c0;
}

/* Document */
.doc {
    width: 1435px;
    border-left: 1px solid #a6a6a6;
    display: flex;
    flex-direction: column;
    flex: none;
}

.doc-tabs {
    height: 25px;
    background: #f1f0ef;
    border-bottom: 1px solid #b8b8b8;
    display: flex;
    align-items: center;
    justify-content: space-between;
    padding-right: 9px;
    flex: none;
}

.doc-tab {
    width: 117px;
    height: 24px;
    margin-top: 1px;
    background: #e6e6e6;
    border: 1px solid #b8b8b8;
    border-bottom: 0;
    border-radius: 6px 14px 0 0;
    display: flex;
    align-items: center;
    gap: 8px;
    padding: 0 0 2px 5px;
    font-weight: 600;
    font-size: 10.700px;
    color: #a4373a;
}

.form-header {
    display: flex;
    height: 67px;
    background: #f1f0ef;
    padding-top: 2px;
    flex: none;
}

.sel-head {
    width: 18px;
    background: #d6dce5;
}

.head-blue {
    width: 1414px;
    background: #1f497d;
    padding: 7px 0 0 37px;
}

/* widely spaced dots, css dotted is too dense */
.head-box {
    position: relative;
    width: 1267px;
    height: 31px;
    padding-left: 71px;
    text-align: center;
    line-height: 18px;
    background:
        repeating-linear-gradient(90deg, #e8edf4 0 1px, transparent 1px 6px) left top / 100% 1px no-repeat,
        repeating-linear-gradient(90deg, #e8edf4 0 1px, transparent 1px 6px) left bottom / 100% 1px no-repeat,
        repeating-linear-gradient(0deg, #e8edf4 0 1px, transparent 1px 6px) left top / 1px 100% no-repeat,
        repeating-linear-gradient(0deg, #e8edf4 0 1px, transparent 1px 6px) right top / 1px 100% no-repeat;
}

.head-box::before {
    content: "";
    position: absolute;
    left: 45px;
    top: 0;
    width: 5px;
    height: 100%;
    background:
        repeating-linear-gradient(0deg, #e8edf4 0 1px, transparent 1px 6px) left top / 1px 100% no-repeat,
        repeating-linear-gradient(0deg, #e8edf4 0 1px, transparent 1px 6px) right top / 1px 100% no-repeat;
}

.head-title {
    font-family: "Lato", sans-serif;
    font-size: 24.5px;
    color: #f00;
}

.form-detail {
    display: flex;
    height: 680px;
    flex: none;
}

.sel-detail {
    width: 18px;
    background: #e6e6e6;
    border-top: 1px solid #111;
    border-right: 1px solid #111;
    padding: 3px 0 0 7px;
}

.sel-arrow {
    display: block;
    width: 0;
    border: 5px solid transparent;
    border-left: 7px solid #555;
    border-right: 0;
}

.detail {
    position: relative;
    width: 1416px;
    background: #fff;
    border: 2px solid #f7a538;
    border-right-width: 3px;
    border-bottom-width: 3px;
    padding: 20px 0 0 21px;
    font-family: "Lato", sans-serif;
    font-size: 13.5px;
    color: #5a5a5a;
}

.logo {
    position: absolute;
    left: 1103px;
    top: 76px;
}

.logo-pz {
    font-family: "Open Sans", sans-serif;
    font-size: 7.500px;
    font-weight: 700;
    fill: #dfe4ff;
    text-anchor: middle;
}

.logo-side {
    font-family: "Liberation Serif", serif;
    font-size: 5.500px;
    fill: #dfe4ff;
}

.logo-pol {
    font-family: "Open Sans", sans-serif;
    font-size: 10px;
    font-weight: 700;
    fill: #fff;
    text-anchor: middle;
}

.field {
    display: flex;
    align-items: flex-start;
}

.field label {
    width: 169px;
    flex: none;
    line-height: 18px;
    letter-spacing: 0.5px;
}

.f-nr { height: 26px; }
.f-om { height: 30px; }
.f-bo { height: 23px; }
.f-bo label { margin-top: -3px; }

.inp {
    border: 1px solid #a6a6a6;
    padding: 0 2px;
    color: #333;
    background: #fff;
    letter-spacing: 0.3px;
}

.inp-r {
    text-align: right;
}

.w-nr { width: 114px; height: 22px; line-height: 21px; }
.w-om { width: 1196px; height: 24px; line-height: 19px; }
.w-bo { width: 245px; height: 23px; line-height: 21px; }

.sub-label {
    margin: 39px 0 0 23px;
    height: 48px;
    line-height: 18px;
    letter-spacing: 0.3px;
}

/* Datasheet */
.ds {
    width: 1057px;
    height: 249px;
    margin-left: 108px;
    border: 1px solid #a6a6a6;
    display: flex;
    flex-direction: column;
    color: #333;
    background: #fff;
}

.ds-body {
    display: flex;
    height: 231px;
}

.ds-clip {
    width: 1038px;
    overflow: hidden;
}

.ds-table {
    table-layout: fixed;
    width: 1038px;
    border-collapse: collapse;
}

.c-sel { width: 19px; }
.c-dat { width: 108px; }
.c-bet { width: 94px; }
.c-naam { width: 140px; }
.c-voor { width: 141px; }
.c-geb { width: 120px; }
.c-ges { width: 45px; }
.c-str { width: 199px; }
.c-nu { width: 37px; }
.c-pc { width: 53px; }
.c-pl { width: 82px; }

.ds-table th {
    position: relative;
    height: 20px;
    background: #e0e3e8;
    border-right: 1px solid #b9bdc4;
    border-bottom: 1px solid #c8c8c8;
    font-weight: 400;
    color: #444;
    padding: 0 16px 2px 2px;
    letter-spacing: 0.3px;
    white-space: nowrap;
    overflow: hidden;
}

.ds-table th.tl {
    text-align: left;
    padding-left: 3px;
}

.ds-table th::after {
    content: "";
    position: absolute;
    right: 5px;
    top: 8px;
    border: 3px solid transparent;
    border-top: 3px solid #555;
}

.ds-table th.corner::after {
    display: none;
}

.corner-mark {
    position: absolute;
    right: 3px;
    bottom: 3px;
    border: 6px solid transparent;
    border-right-color: #c9ced6;
    border-bottom-color: #c9ced6;
}

.ds-table td {
    height: 20px;
    border-right: 1px solid #e1e1e1;
    border-bottom: 1px solid #e1e1e1;
    padding: 0 3px;
    white-space: nowrap;
    overflow: hidden;
    letter-spacing: 0.3px;
}

.ds-table td.r {
    text-align: right;
    padding-right: 1px;
    letter-spacing: -0.3px;
}

.ds-table td.n {
    letter-spacing: -0.2px;
    font-size: 13px;
}

.ds-table td.up {
    font-size: 12.500px;
    letter-spacing: -0.2px;
}

.ds-table td.c {
    text-align: center;
    padding: 2px 0 0 2px;
    line-height: 0;
}

.ds-table td.rs {
    background: #dfe3e8;
    border-right-color: #aab0ba;
    border-bottom-color: #fff;
}

.ds-table tbody tr:nth-child(even) td {
    background: #f2f2f2;
}

.ds-table tbody tr:nth-child(even) td.rs {
    background: #dfe3e8;
}

.ds-table tbody tr.cur td {
    background: #a2cdf0;
}

.ds-table tbody tr.cur td.rs {
    background: #dfe3e8;
}

.vscroll {
    width: 18px;
    display: flex;
    flex-direction: column;
    background: #c8c8c8;
    padding-left: 1px;
}

.sb-btn {
    width: 14px;
    height: 15px;
    margin-left: 1px;
    background: #f4f4f4;
    border: 1px solid #8e8e8e;
    position: relative;
    flex: none;
}

.sb-btn i {
    position: absolute;
    border: 3px solid transparent;
}

.sb-btn .up { left: 3px; top: 2px; border-bottom: 4px solid #666; }
.sb-btn .down { left: 3px; top: 5px; border-top: 4px solid #666; }
.sb-btn .left { left: 1px; top: 3px; border-right: 4px solid #666; }
.sb-btn .right { left: 6px; top: 3px; border-left: 4px solid #666; }

.sb-thumb {
    width: 14px;
    height: 17px;
    margin-left: 1px;
    background: #fff;
    border: 1px solid #8e8e8e;
    flex: none;
}

.sb-track {
    flex: 1;
}

.ds-nav {
    flex: 1;
    display: flex;
    border-top: 1px solid #a6a6a6;
}

.recnav {
    display: flex;
    align-items: center;
    background: linear-gradient(#f7f7f7 55%, #e6e6ea 55%);
    white-space: nowrap;
    font-size: 11.5px;
}

.rec-ds {
    width: 384px;
    padding-left: 6px;
    border-right: 1px solid #a6a6a6;
    flex: none;
}

.rec-form {
    height: 17px;
    padding: 1px 0 0 5px;
}

.rec-lbl {
    color: #666;
    margin-right: 7px;
}

.rn {
    margin-right: 8px;
}

.rn-p {
    margin-right: 0;
}

.rn-n {
    margin-left: 7px;
}

.rn-new {
    margin-right: 6px;
}

.rec-box {
    background: #fff;
    border: 1px solid #d0d0d0;
    height: 100%;
    padding: 0 2px;
    line-height: 14px;
    color: #333;
    font-size: 11.5px;
    align-self: stretch;
}

.rb-231 { width: 62px; margin-left: 1px; }
.rb-9 { width: 50px; margin-left: 1px; }
.rb-zoek { width: 70px; margin-left: 13px; }

.rec-filter {
    display: flex;
    align-items: center;
    gap: 2px;
    color: #b0b0b0;
    border-left: 1px solid #d0d0d0;
    padding-left: 4px;
    height: 100%;
}

.hscroll {
    flex: 1;
    display: flex;
    align-items: center;
    background: #c8c8c8;
    padding-left: 3px;
}

.hscroll .sb-btn {
    margin-left: 0;
    width: 15px;
    height: 14px;
}

.sb-thumb-h {
    width: 309px;
    height: 14px;
    background: #fff;
    border: 1px solid #8e8e8e;
}

.sb-corner {
    width: 20px;
}

/* Form footer */
.form-footer {
    height: 72px;
    background: #5b7fb5;
    color: #3f5678;
    font-family: "Lato", sans-serif;
    font-size: 13.200px;
    text-align: right;
    padding: 21px 17px 0 0;
    flex: none;
}

.foot-time {
    padding-right: 6px;
    margin-bottom: 9px;
}

/* Property sheet */
.props {
    width: 270px;
    padding: 0 10px 0 10px;
    height: 852px;
    background: #e6e6e6;
    flex: none;
    color: #444;
}

.props-head {
    display: flex;
    justify-content: space-between;
    padding: 11px 0 0 2px;
    height: 41px;
}

.props-head svg {
    margin: 4px 1px 0 0;
}

.props-title {
    font-size: 20.800px;
    font-weight: 300;
    color: #a4373a;
    white-space: nowrap;
    letter-spacing: -0.2px;
    line-height: 30px;
}

.props-type {
    display: flex;
    justify-content: space-between;
    padding: 0 3px 0 2px;
    height: 34px;
    font-size: 10.500px;
    line-height: 14px;
}

.props-type svg {
    margin-top: 5px;
}

.props-select {
    position: relative;
    height: 21px;
    border: 1px solid #a6a6a6;
    background: #fff;
    padding-left: 4px;
    line-height: 17px;
    font-size: 11px;
}

.props-drop {
    position: absolute;
    right: 1px;
    top: 1px;
    width: 17px;
    height: 17px;
    border: 1px solid #8e8e8e;
    background: #e6e6e6;
    display: flex;
    align-items: center;
    justify-content: center;
    color: #555;
}

.props-tabs {
    display: flex;
    height: 26px;
    align-items: flex-end;
}

.props-tabs span {
    width: 50px;
    height: 18px;
    background: #ececec;
    border: 1px solid #dcdcdc;
    text-align: center;
    line-height: 16px;
    font-size: 11px;
    overflow: hidden;
    white-space: nowrap;
    color: #333;
}

.props-tabs .ptab-on {
    height: 21px;
    background: #fff;
    border: 0;
    line-height: 17px;
}

.props-body {
    height: 730px;
    margin-left: -2px;
    background: #e6e6e6;
    border: solid #fff;
    border-width: 7px 3px 3px 4px;
}

.prow {
    display: grid;
    grid-template-columns: 172px 1fr;
    height: 15px;
    border-bottom: 2px solid #c8c8c8;
    line-height: 13px;
    font-size: 10.800px;
    letter-spacing: 0.1px;
    white-space: nowrap;
}

.prow span + span {
    border-left: 2px solid #b8b8b8;
    padding-left: 2px;
}

.prow span:first-child {
    padding-left: 1px;
}

/* Status bar */
.status {
    flex: none;
    height: 22px;
    background: #f3f3f3;
    border-top: 2px solid #d0d0d0;
    display: flex;
    align-items: center;
    padding-left: 8px;
    font-size: 11px;
}

.st-text {
    width: 1715px;
    padding-bottom: 2px;
}

.st-num {
    width: 76px;
    white-space: nowrap;
    padding-bottom: 2px;
}

.st-view {
    width: 40px;
    height: 20px;
    display: flex;
    align-items: center;
    justify-content: center;
    flex: none;
}

.st-on {
    background: #c6c6c6;
}

/* Taskbar */
.taskbar {
    flex: none;
    height: 40px;
    display: flex;
    background: linear-gradient(90deg, #1f3a44, #1b2a44 60%);
    color: #fff;
}

.tb-start {
    width: 48px;
    display: flex;
    align-items: center;
    justify-content: center;
}

.tb-search {
    width: 344px;
    background: #f3f3f3;
    border-top: 1px solid #c9c9c9;
    display: flex;
    align-items: center;
    padding-left: 12px;
    color: #222;
    font-size: 15px;
    letter-spacing: -0.2px;
}

.tb-search span {
    margin: 0 0 2px 11px;
    width: 236px;
    white-space: nowrap;
}

.tb-doodle {
    margin-top: 1px;
}

.tb-apps {
    display: flex;
}

.tb-app {
    width: 49px;
    height: 40px;
    display: flex;
    align-items: center;
    justify-content: center;
    border-bottom: 2px solid transparent;
}

.tb-app:first-child {
    width: 50px;
}

.tb-app-on {
    background: #41555f;
    border-bottom-color: #76b9ed;
}

.tb-app:nth-child(4) {
    border-bottom-color: #76b9ed;
}

.tb-a {
    font-family: "Liberation Sans", sans-serif;
    font-size: 11px;
    font-weight: 700;
    fill: #fff;
    text-anchor: middle;
}

.tb-tray {
    display: flex;
    align-items: center;
    margin-left: 893px;
    white-space: nowrap;
    font-size: 13.500px;
}

.tb-temp { margin: 0 0 0 8px; }
.tb-weather { margin-left: 10px; font-size: 12.600px; }
.tb-caret { margin-left: 19px; }
.tb-net { margin-left: 8.500px; }
.tb-vol { margin-left: 9px; }
.tb-lang { margin-left: 12px; font-size: 12px; }

.tb-clock {
    display: flex;
    flex-direction: column;
    align-items: center;
    font-size: 12.500px;
    line-height: 18px;
    margin-left: 12px;
    width: 58px;
}

.tb-note {
    margin-left: 19px;
}
```
